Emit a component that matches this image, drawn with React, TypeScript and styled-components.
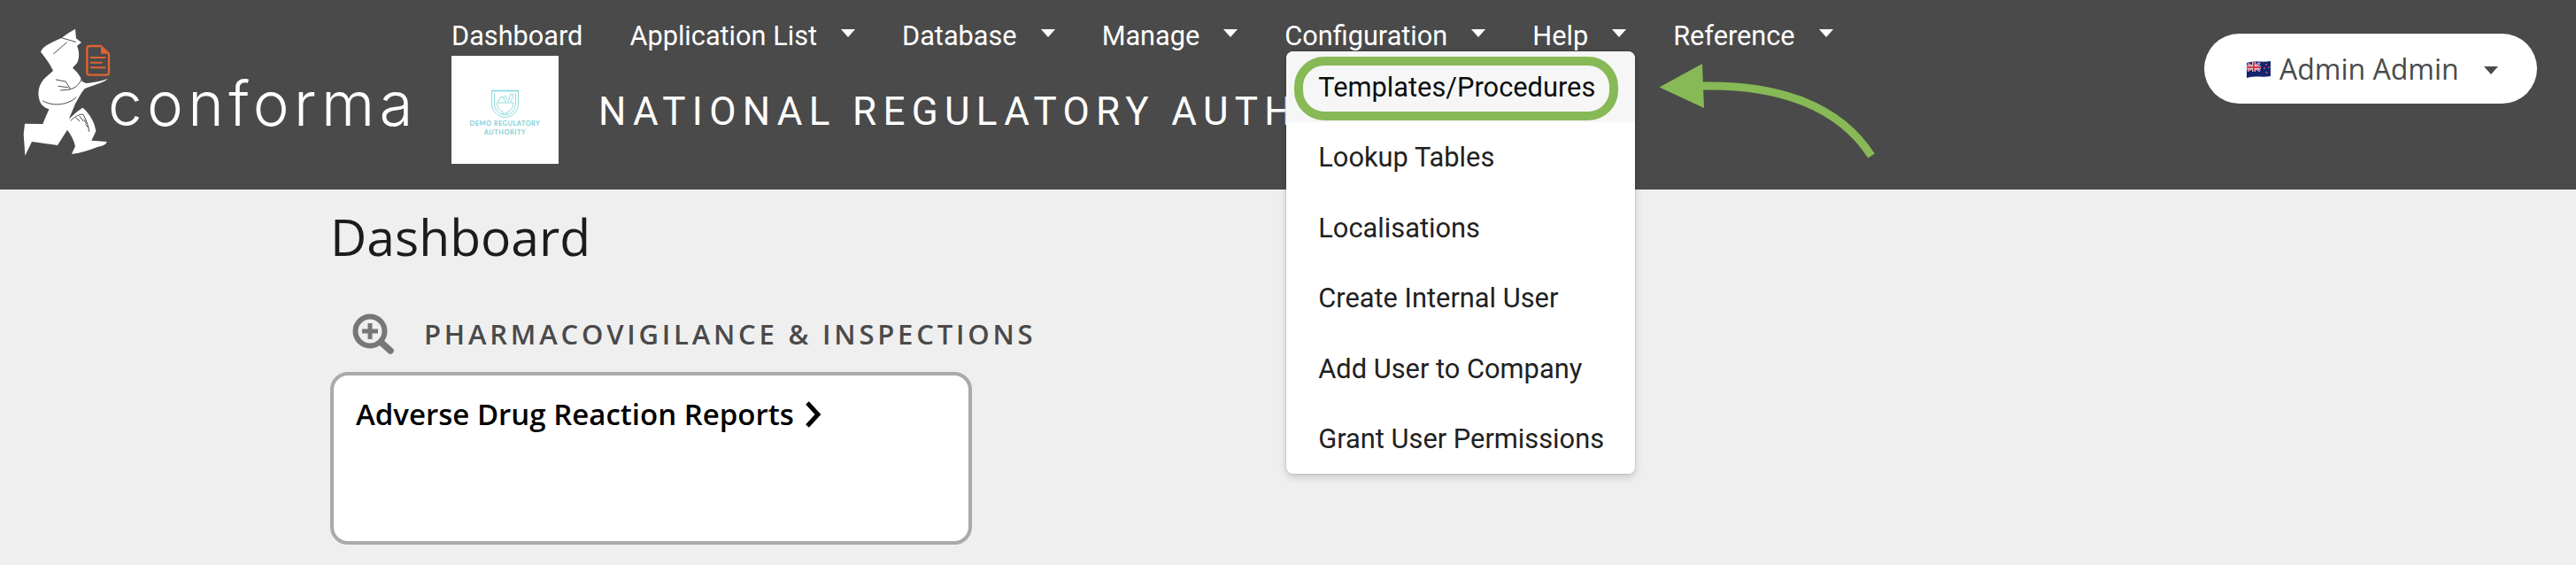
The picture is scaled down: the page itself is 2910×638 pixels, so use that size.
import React from "react";
import styled, { createGlobalStyle } from "styled-components";

const Global = createGlobalStyle`
  html, body { margin: 0; padding: 0; background: #efefef; }
  body { font-family: "Open Sans", "Liberation Sans", sans-serif; width: 2910px; height: 638px; overflow: hidden; }
`;

const Page = styled.div`
  width: 2910px;
  height: 638px;
  background: #efefef;
`;

const Header = styled.header`
  position: relative;
  display: flex;
  align-items: flex-start;
  height: 214px;
  background: #4a4a4a;
`;

const LogoBlock = styled.div`
  display: flex;
  align-items: flex-start;
  width: 510px;
  flex: none;
  padding: 30px 0 0 25px;
  box-sizing: border-box;
`;

const Wordmark = styled.div`
  font-family: Inter, Lato, sans-serif;
  font-weight: 300;
  font-size: 69px;
  line-height: 80px;
  letter-spacing: 5.4px;
  color: #fff;
  margin-top: 47px;
  margin-left: -3px;
`;

const NavColumn = styled.div`
  display: flex;
  flex-direction: column;
  padding-top: 24px;
`;

const NavRow = styled.nav`
  display: flex;
  height: 39px;
  gap: 53px;
`;

const NavItem = styled.div`
  position: relative;
  display: flex;
  font-family: Roboto, sans-serif;
  font-size: 30.7px;
  line-height: 34px;
  color: #fff;
  white-space: nowrap;
`;

const Caret = styled.span`
  width: 0;
  height: 0;
  margin: 9px 0 0 27px;
  border-left: 8px solid transparent;
  border-right: 8px solid transparent;
  border-top: 9px solid #fff;
`;

const Menu = styled.div`
  position: absolute;
  z-index: 3;
  left: 2px;
  top: 34px;
  width: 394px;
  height: 477px;
  display: flex;
  flex-direction: column;
  background: #fff;
  border-radius: 8px;
  box-shadow: 0 4px 8px rgba(0, 0, 0, 0.16), 0 0 2px rgba(0, 0, 0, 0.3);
  overflow: hidden;
`;

const MenuItem = styled.div<{ $active?: boolean }>`
  position: relative;
  flex: 1;
  display: flex;
  align-items: center;
  padding: 2px 0 0 36px;
  font-family: Roboto, sans-serif;
  font-size: 30.8px;
  color: ${(p) => (p.$active ? "#0d0d0d" : "#212121")};
  background: ${(p) => (p.$active ? "#f6f6f6" : "#fff")};
`;

const Highlight = styled.span`
  position: absolute;
  left: 9px;
  right: 19px;
  top: 6px;
  bottom: 2px;
  border: 10px solid #87b956;
  border-radius: 34px;
`;

const OrgRow = styled.div`
  display: flex;
  align-items: center;
  height: 122px;
  gap: 45px;
`;

const OrgLogo = styled.div`
  display: flex;
  flex-direction: column;
  align-items: center;
  box-sizing: border-box;
  width: 121px;
  height: 122px;
  padding-top: 38px;
  background: #fff;
`;

const OrgName = styled.div`
  font-family: Lato, sans-serif;
  font-size: 7.4px;
  line-height: 9.5px;
  letter-spacing: 0.5px;
  font-weight: 700;
  text-align: center;
  color: #7fd0d8;
  margin-top: 1px;
`;

const OrgTitle = styled.div`
  font-family: Roboto, sans-serif;
  font-weight: 400;
  font-size: 44px;
  letter-spacing: 7.3px;
  margin-top: 3px;
  color: #fff;
  white-space: nowrap;
`;

const UserPill = styled.div`
  display: flex;
  align-items: center;
  box-sizing: border-box;
  width: 376px;
  height: 79px;
  margin: 38px 44px 0 auto;
  padding-left: 48px;
  background: #fff;
  border-radius: 40px;
  font-family: "Open Sans", sans-serif;
  font-weight: 500;
  font-size: 32px;
  color: #4a4a4a;
  white-space: nowrap;
`;

const UserName = styled.span`
  margin-left: 10px;
`;

const UserCaret = styled.span`
  width: 0;
  height: 0;
  margin: 4px 0 0 28px;
  border-left: 8px solid transparent;
  border-right: 8px solid transparent;
  border-top: 9px solid #4a4a4a;
`;

const ArrowOverlay = styled.svg`
  position: absolute;
  z-index: 4;
  left: 1870px;
  top: 65px;
`;

const Main = styled.main`
  padding: 15px 0 0 373px;
`;

const Title = styled.h1`
  margin: 0;
  font-family: "Open Sans", sans-serif;
  font-weight: 400;
  font-size: 57px;
  line-height: 76px;
  color: #1c1c1c;
`;

const SectionRow = styled.div`
  display: flex;
  align-items: center;
  gap: 34px;
  margin: 49px 0 20px 25px;
  height: 46px;
`;

const SectionLabel = styled.h2`
  margin: 0;
  font-family: "Open Sans", sans-serif;
  font-weight: 600;
  font-size: 31px;
  letter-spacing: 3.8px;
  color: #4a4a4a;
  white-space: nowrap;
`;

const Card = styled.div`
  box-sizing: border-box;
  width: 725px;
  height: 195px;
  padding: 22px 25px;
  background: #fff;
  border: 4px solid #aaa;
  border-radius: 20px;
`;

const CardTitle = styled.div`
  display: flex;
  align-items: center;
  gap: 12px;
  font-family: "Open Sans", sans-serif;
  font-weight: 600;
  font-size: 33px;
  line-height: 44px;
  color: #000;
  white-space: nowrap;
`;

const Mascot = () => (
  <svg width="100" height="146.67" viewBox="45 30 300 440">
    <path
      fill="#fff"
      d="M225 38 L228 70 L246 84 L231 95 C239 112 240 135 232 152 L216 170 C230 182 244 198 248 216 L262 222 C285 220 315 214 335 207 C328 216 300 224 258 240 C248 250 238 268 225 292 C218 310 210 328 203 344 C222 326 238 312 250 305 C272 322 292 355 295 385 L280 416 L332 420 C330 430 318 434 300 438 C275 448 245 458 213 462 L225 435 C220 415 210 395 198 380 L165 432 L78 420 L55 467 L50 395 L54 359 L115 360 C122 342 130 326 136 310 C120 305 108 295 104 280 C95 255 102 222 125 202 L150 180 C144 165 128 140 108 116 C114 98 135 88 178 69 C195 56 210 46 225 38 Z"
    />
    <g fill="none" stroke="#4a4a4a" strokeLinecap="round">
      <path strokeWidth="3" d="M152 122 L196 84" />
      <path strokeWidth="3" d="M178 68 L226 82" />
      <path strokeWidth="3" d="M116 282 C150 302 200 296 228 270" />
      <path strokeWidth="3" d="M160 210 L192 216 L208 240 M168 232 L200 236 M176 246 L205 243 M205 243 C225 240 240 225 246 208" />
      <path strokeWidth="3" d="M210 348 C225 335 240 325 252 328 C262 345 270 368 272 385 M228 340 L240 350 M240 334 L252 350 M255 345 L262 358 M260 362 L270 372" />
    </g>
    <g fill="none" stroke="#dd6433">
      <path
        strokeWidth="7"
        strokeLinejoin="round"
        d="M274 96 H312 L339 122 V186 Q339 194 331 194 H274 Q265 194 265 186 V104 Q265 96 274 96 Z"
      />
      <path strokeWidth="6" strokeLinecap="round" d="M278 135 H325 M278 152 H315 M278 169 H325" />
    </g>
    <path fill="#dd6433" d="M312 96 L339 122 H312 Z" />
  </svg>
);

const Shield = () => (
  <svg width="35" height="33" viewBox="0 0 35 33">
    <g fill="none" stroke="#85d6dc" strokeWidth="0.9">
      <path d="M2 1.5 H33" strokeWidth="1.6" />
      <path d="M2.5 2 V16 C2.5 25 10 31.5 17.5 31.5 C25 31.5 32.5 25 32.5 16 V2" />
      <path d="M5.5 4 V16 C5.5 23 11 29 17.5 29 C24 29 29.5 23 29.5 16 V4" />
      <path d="M8.5 15 H27 C27 20 24 24 20 25 L21 27 H14 L15 25 C11 24 8.5 20 8.5 15 Z" />
      <path d="M10 14 L12 9 L15 8 L18 14 M16 9 L18 7 L20 12" />
      <path d="M21 14 L24 5 L27 6 L24 14" />
    </g>
  </svg>
);

const Flag = () => (
  <svg width="27" height="20" viewBox="0 0 27 20">
    <path fill="#14246e" d="M0 3 C8 0 18 3 27 1 V18 C18 20 8 17 0 20 Z" />
    <path stroke="#e8e8f0" strokeWidth="2.4" d="M1 4 L15 12 M15 3 L1 12" />
    <path stroke="#d8344a" strokeWidth="1" d="M1 4 L15 12 M15 3 L1 12" />
    <path stroke="#e8e8f0" strokeWidth="3.6" d="M8 2 V13 M0 8 H16" />
    <path stroke="#d8344a" strokeWidth="2" d="M8 2 V13 M0 8 H16" />
    <g fill="#e05a66">
      <circle cx="22" cy="5" r="1" />
      <circle cx="25" cy="8" r="0.9" />
      <circle cx="20" cy="9" r="0.9" />
      <circle cx="22.5" cy="14" r="1" />
    </g>
  </svg>
);

const SearchPlus = () => (
  <svg width="47" height="46" viewBox="0 0 47 46">
    <circle cx="20" cy="20" r="16.5" fill="none" stroke="#777" strokeWidth="6" />
    <path stroke="#777" strokeWidth="5" d="M20 11 V29 M11 20 H29" />
    <path stroke="#777" strokeWidth="7.5" strokeLinecap="round" d="M33 33 L43 42" />
  </svg>
);

const Chevron = () => (
  <svg width="19" height="30" viewBox="0 0 19 30">
    <path fill="none" stroke="#000" strokeWidth="5" d="M3 2 L15 15 L3 28" />
  </svg>
);

const Arrow = () => (
  <ArrowOverlay width="250" height="120" viewBox="0 0 250 120">
    <path fill="none" stroke="#87b956" strokeWidth="9" d="M52 32 C140 30 208 55 244 111" />
    <path fill="#87b956" d="M4.5 33.5 L53 7 L55 57 Z" />
  </ArrowOverlay>
);

const menuItems = ["Lookup Tables", "Localisations", "Create Internal User", "Add User to Company", "Grant User Permissions"];

export default function App() {
  return (
    <Page>
      <Global />
      <Header>
        <LogoBlock>
          <Mascot />
          <Wordmark>conforma</Wordmark>
        </LogoBlock>
        <NavColumn>
          <NavRow>
            <NavItem>Dashboard</NavItem>
            <NavItem>Application List<Caret /></NavItem>
            <NavItem>Database<Caret /></NavItem>
            <NavItem>Manage<Caret /></NavItem>
            <NavItem>
              Configuration<Caret />
              <Menu>
                <MenuItem $active>
                  Templates/Procedures
                  <Highlight />
                </MenuItem>
                {menuItems.map((m) => (
                  <MenuItem key={m}>{m}</MenuItem>
                ))}
              </Menu>
            </NavItem>
            <NavItem>Help<Caret /></NavItem>
            <NavItem>Reference<Caret /></NavItem>
          </NavRow>
          <OrgRow>
            <OrgLogo>
              <Shield />
              <OrgName>DEMO REGULATORY<br />AUTHORITY</OrgName>
            </OrgLogo>
            <OrgTitle>NATIONAL REGULATORY AUTHORITY</OrgTitle>
          </OrgRow>
        </NavColumn>
        <UserPill>
          <Flag />
          <UserName>Admin Admin</UserName>
          <UserCaret />
        </UserPill>
        <Arrow />
      </Header>
      <Main>
        <Title>Dashboard</Title>
        <SectionRow>
          <SearchPlus />
          <SectionLabel>PHARMACOVIGILANCE &amp; INSPECTIONS</SectionLabel>
        </SectionRow>
        <Card>
          <CardTitle>Adverse Drug Reaction Reports <Chevron /></CardTitle>
        </Card>
      </Main>
    </Page>
  );
}
